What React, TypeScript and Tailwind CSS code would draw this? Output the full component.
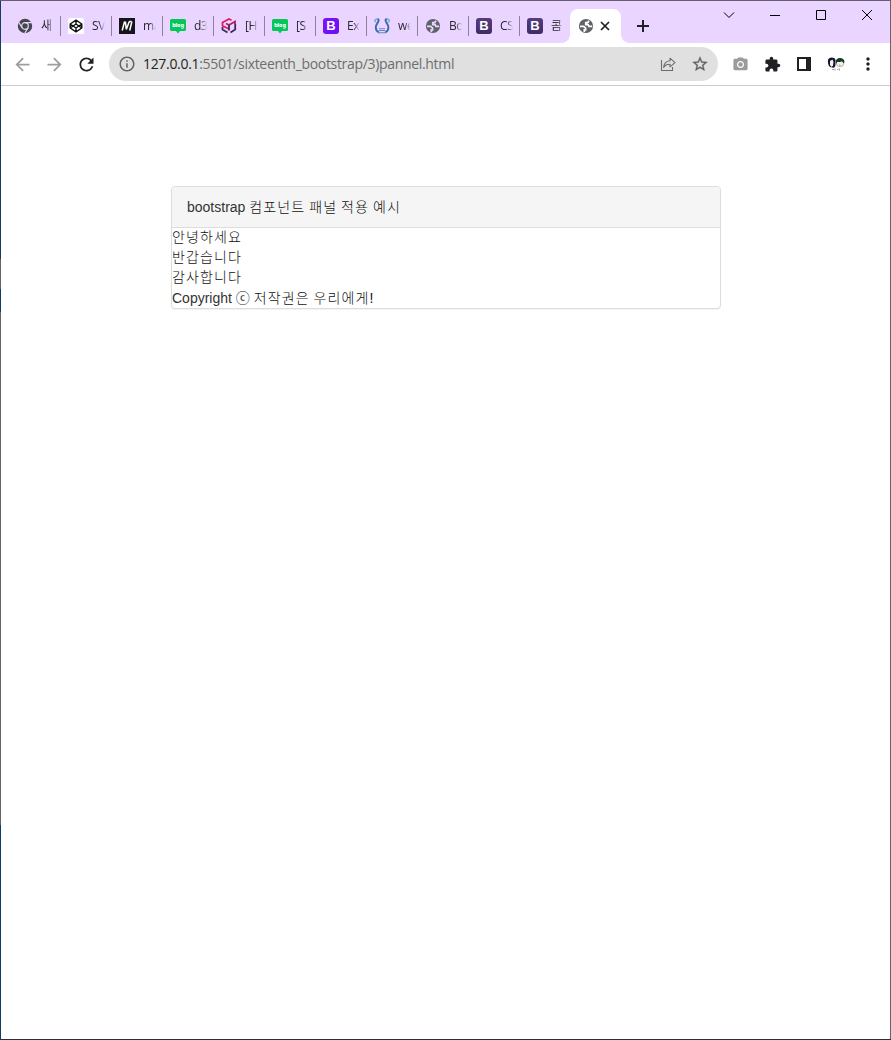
import type { ReactNode } from 'react'
import {
  MdArrowBack,
  MdArrowForward,
  MdExtension,
  MdInfoOutline,
  MdMoreVert,
  MdPhotoCamera,
  MdRefresh,
  MdStarOutline,
} from 'react-icons/md'

/* Favicons */

const ChromeIcon = () => (
  <svg width="16" height="16" viewBox="0 0 16 16">
    <circle cx="8" cy="8" r="7.2" fill="#44474c" />
    <circle cx="8" cy="8" r="3.3" fill="#44474c" stroke="#e9d5ff" strokeWidth="1.2" />
    <path d="M8 4.6h6.6M5 9.7 1.8 4.2M11 9.7 7.8 15.3" stroke="#e9d5ff" strokeWidth="1.2" fill="none" />
  </svg>
)

const CodepenIcon = () => (
  <svg width="16" height="16" viewBox="0 0 16 16">
    <rect width="16" height="16" rx="1.5" fill="#fff" />
    <path
      d="M8 2.2 13.8 6v4L8 13.8 2.2 10V6L8 2.2ZM8 2.2V6M8 10v3.8M2.2 6 8 10l5.8-4M2.2 10 8 6l5.8 4"
      fill="none"
      stroke="#111"
      strokeWidth="1.4"
      strokeLinejoin="round"
    />
  </svg>
)

const MdnIcon = () => (
  <svg width="16" height="16" viewBox="0 0 16 16">
    <rect width="16" height="16" fill="#15141a" />
    <path d="M3.2 12.5 5.6 3.5M6.4 3.5l.9 8M7.3 11.5l3-8M12.9 3.5l-2.2 9M10.3 3.5h2.2" fill="none" stroke="#fff" strokeWidth="1.5" />
  </svg>
)

const BlogIcon = () => (
  <svg width="16" height="16" viewBox="0 0 16 16">
    <path d="M1.5 1h13a1.5 1.5 0 0 1 1.5 1.5v9a1.5 1.5 0 0 1-1.5 1.5H10l-2 2.4L6 13H1.5A1.5 1.5 0 0 1 0 11.5v-9A1.5 1.5 0 0 1 1.5 1Z" fill="#03c75a" />
    <text x="8" y="8.6" textAnchor="middle" fontSize="5.4" fontWeight="800" fontFamily="Inter, sans-serif" fill="#fff">
      blog
    </text>
  </svg>
)

const CubeIcon = () => (
  <svg width="16" height="16" viewBox="0 0 16 16" fill="none" strokeWidth="1.8">
    <path d="M10.5 2.2 8 1 1.5 4.5v3.3L8 11" stroke="#dc1c5c" />
    <path d="M5 5.5 8 7l6-3.5V6" stroke="#b61b62" />
    <path d="M1.5 9v2.6L6.5 14.500M14.200 6v5.500L9.500 14.500M8 7v5.500" stroke="#40265f" />
  </svg>
)

const BootstrapIcon = ({ dark }: { dark?: boolean }) => (
  <span
    className={`grid h-4 w-4 place-items-center rounded-[3px] font-['Liberation_Sans',sans-serif] text-[13px] leading-4 font-bold text-white ${
      dark ? 'bg-linear-to-b from-[#563d7c] to-[#412b65]' : 'bg-linear-to-br from-[#8010fa] to-[#6610f2]'
    }`}
  >
    B
  </span>
)

const LyreIcon = () => (
  <svg width="16" height="16" viewBox="0 0 16 16" fill="none">
    <path d="M3.5 1C.5 1 .2 3.5 2.2 4M12.7 1c3 0 3.3 2.5 1.3 3" stroke="#7ba5e0" strokeWidth="1.5" />
    <path d="M3.5 1c3 1-.8 4.3-1.5 7-.6 3 .8 5.5 3 6.5M12.7 1c-3 1 .8 4.3 1.5 7 .6 3-.8 5.5-3 6.5" stroke="#3c69ad" strokeWidth="1.9" />
    <path d="M5 10.7h6M4.8 12.500h6.400M4 14.800h8" stroke="#6087c0" strokeWidth="1.1" />
  </svg>
)

const GlobeIcon = ({ land }: { land: string }) => (
  <svg width="16" height="16" viewBox="0 0 16 16">
    <circle cx="8" cy="8" r="7.1" fill="#5f6368" />
    <path d="M11 2.8 9.7 4.600H7.800v2h2.300l.8 1.700h3.300" fill="none" stroke={land} strokeWidth="1.8" />
    <path d="M2 8.400h3.600l2 1.800v1.700H6.300v2.200" fill="none" stroke={land} strokeWidth="1.700" />
  </svg>
)

const ShareIcon = () => (
  <svg width="16" height="16" viewBox="0 0 16 16" fill="none" stroke="#6b6e71" strokeWidth="1.1">
    <path d="M1.5 4v10.5h11V11" />
    <path d="M10 2.2 15 6.6l-5 4.2V8.3c-3 0-5 .8-6.3 3.2C4 7.5 6.5 5 10 4.7Z" strokeLinejoin="round" />
  </svg>
)

const AvatarIcon = () => (
  <svg width="18" height="16" viewBox="0 0 18 16">
    <path d="M1 4c.5-3 6.5-3.5 7.500 0v4.500c0 2-1 3-2 3.200L3 11C1.200 10 .7 6.500 1 4Z" fill="#14142c" />
    <path d="M3 5 5.500 3.500 6.500 6l-.5 3.500-1.500 1.500L3 9Z" fill="#f4eeee" />
    <circle cx="13" cy="6.700" r="4" fill="#f8efec" stroke="#777" strokeWidth=".5" />
    <path d="M8.700 6c0-5 7.500-5.500 8.800-.8l-1 2.300-1.500-2.300c-2 1-4 .9-5 .7L9.500 8Z" fill="#173d20" />
    <path d="M5 13.500h2M8 12.500v2M10 13.500h1.500M12.500 12.500v2" stroke="#888" strokeWidth=".8" />
    <path d="M12 9h1.500" stroke="#cc7770" strokeWidth=".8" />
  </svg>
)

const tabs: { icon: ReactNode; title: string }[] = [
  { icon: <ChromeIcon />, title: '새' },
  { icon: <CodepenIcon />, title: 'SV' },
  { icon: <MdnIcon />, title: 'ma' },
  { icon: <BlogIcon />, title: 'd3' },
  { icon: <CubeIcon />, title: '[H' },
  { icon: <BlogIcon />, title: '[S' },
  { icon: <BootstrapIcon />, title: 'Ex' },
  { icon: <LyreIcon />, title: 'we' },
  { icon: <GlobeIcon land="#e9d5ff" />, title: 'Bo' },
  { icon: <BootstrapIcon dark />, title: 'CS' },
  { icon: <BootstrapIcon dark />, title: '콤' },
]

const Tab = ({ icon, title, last }: { icon: ReactNode; title: string; last: boolean }) => (
  <div className="flex h-[33px] w-[51px] shrink-0 items-center pl-2">
    <span className="grid h-4 w-4 shrink-0 place-items-center">{icon}</span>
    <span className="ml-2 w-[13px] overflow-hidden whitespace-nowrap mask-r-from-50% mask-r-to-100% font-['Open_Sans','Noto_Sans_CJK_KR',sans-serif] text-[12px] leading-4 tracking-[-0.4px] text-[#29262f]">
      {title}
    </span>
    <span className={`-mr-px ml-auto h-5 w-px ${last ? '' : 'bg-[#8d8299]'}`} />
  </div>
)

const ActiveTab = () => (
  <div className="relative flex h-[34px] w-[51px] shrink-0 items-center rounded-t-lg bg-white pl-2">
    {/* curved feet */}
    <span className="absolute bottom-0 -left-2 h-2 w-2 bg-[radial-gradient(circle_at_0_0,transparent_7.5px,#fff_8px)]" />
    <span className="absolute bottom-0 -right-2 h-2 w-2 bg-[radial-gradient(circle_at_100%_0,transparent_7.5px,#fff_8px)]" />
    <span className="grid h-4 w-4 place-items-center">
      <GlobeIcon land="#fff" />
    </span>
    <svg width="14" height="14" viewBox="0 0 14 14" stroke="#202124" strokeWidth="1.7" className="ml-1">
      <path d="m3 3 8 8M11 3l-8 8" />
    </svg>
  </div>
)

const WindowButtons = () => (
  <div className="ml-auto flex self-start stroke-black">
    <Control d="M1 3.5 6 8.5l5-5" />
    <Control d="M1 6.5h10" />
    <Control d="M1.5 1.5h9v9h-9Z" />
    <Control d="m1 1 10 10M11 1 1 11" />
  </div>
)

const Control = ({ d }: { d: string }) => (
  <span className="grid h-7 w-[46px] place-items-center">
    <svg width="12" height="12" viewBox="0 0 12 12" fill="none" strokeWidth="1">
      <path d={d} />
    </svg>
  </span>
)

const ToolButton = ({ children }: { children: ReactNode }) => (
  <span className="grid h-8 w-8 shrink-0 place-items-center">{children}</span>
)

const Korean = ({ children }: { children: ReactNode }) => (
  <span className="font-light tracking-[1.1px] text-[#111] [word-spacing:-1px]">{children}</span>
)

function App() {
  return (
    <div className="grid h-[1040px] w-[891px] grid-cols-[1px_1fr_1px] grid-rows-[1px_1fr_1px] overflow-hidden bg-white">
      <div className="col-span-3 bg-[#675f70]" />

      {/* desktop showing at the window's left edge */}
      <div className="flex flex-col bg-[#123d63]">
        <div className="h-[258px] bg-[#173c61]" />
        <div className="h-[30px] bg-[#656565]" />
        <div className="h-[23px]" />
        <div className="h-[513px] bg-[#656565]" />
      </div>

      <div className="flex min-w-0 flex-col">
        {/* Tab strip */}
        <header className="flex h-[42px] items-end bg-[#e9d5ff] pl-2">
          {tabs.map((tab, i) => (
            <div key={i} className="pb-px">
              <Tab icon={tab.icon} title={tab.title} last={i === tabs.length - 1} />
            </div>
          ))}
          <ActiveTab />
          <span className="ml-4 grid h-[34px] w-3 place-items-center">
            <svg width="12" height="12" viewBox="0 0 12 12" stroke="#202124" strokeWidth="2">
              <path d="M6 0v12M0 6h12" />
            </svg>
          </span>
          <WindowButtons />
        </header>

        {/* Toolbar */}
        <nav className="flex h-[43px] items-center border-b border-[#cbcdcf] px-1.5">
          <ToolButton><MdArrowBack size={21} color="#9c9ea0" className="-ml-px" /></ToolButton>
          <ToolButton><MdArrowForward size={21} color="#9c9ea0" className="-ml-px" /></ToolButton>
          <ToolButton><MdRefresh size={21} color="#202124" className="-ml-px" /></ToolButton>
          <div className="mx-1.5 flex h-[34px] flex-1 items-center rounded-full bg-[#e0e0e0] pl-[9px] pr-0.5">
            <MdInfoOutline size={18} color="#5f6368" />
            <p className="ml-[7px] whitespace-nowrap font-['Open_Sans',sans-serif] text-[14px] leading-5 tracking-[-0.32px] text-[#6b6e71]">
              <span className="text-[#202124]">127.0.0.1</span>:5501/sixteenth_bootstrap/3)pannel.html
            </p>
            <span className="ml-auto flex">
              <ToolButton><ShareIcon /></ToolButton>
              <ToolButton><MdStarOutline size={18} color="#5f6368" stroke="#5f6368" strokeWidth={0.4} /></ToolButton>
            </span>
          </div>
          <ToolButton><MdPhotoCamera size={17} color="#9b9b9b" /></ToolButton>
          <ToolButton><MdExtension size={17} color="#202124" /></ToolButton>
          <ToolButton>
            <span className="h-3.5 w-3.5 border-2 border-r-[5px] border-[#202124]" />
          </ToolButton>
          <ToolButton><AvatarIcon /></ToolButton>
          <ToolButton><MdMoreVert size={20} color="#202124" /></ToolButton>
        </nav>

        {/* Page */}
        <main className="flex-1 pt-[100px] pl-[170px] font-['Liberation_Sans','Noto_Sans_CJK_KR',sans-serif] text-[14px] leading-5 text-[#333]">
          <section className="w-[550px] rounded border border-[#ddd] bg-white shadow-[0_1px_1px_rgba(0,0,0,0.05)]">
            <div className="h-[41px] rounded-t-[3px] border-b border-[#ddd] bg-[#f5f5f5] px-[15px] py-2.5">
              bootstrap <Korean>컴포넌트 패널 적용 예시</Korean>
            </div>
            <p className="h-5 leading-[18px]"><Korean>안녕하세요</Korean></p>
            <p className="h-5 leading-[18px]"><Korean>반갑습니다</Korean></p>
            <p className="h-5 leading-[18px]"><Korean>감사합니다</Korean></p>
            <p className="h-5">Copyright ⓒ <Korean>저작권은 우리에게!</Korean></p>
          </section>
        </main>
      </div>

      <div className="bg-[#656565]" />
      <div className="col-span-3 bg-[#26323d]" />
    </div>
  )
}

export default App
